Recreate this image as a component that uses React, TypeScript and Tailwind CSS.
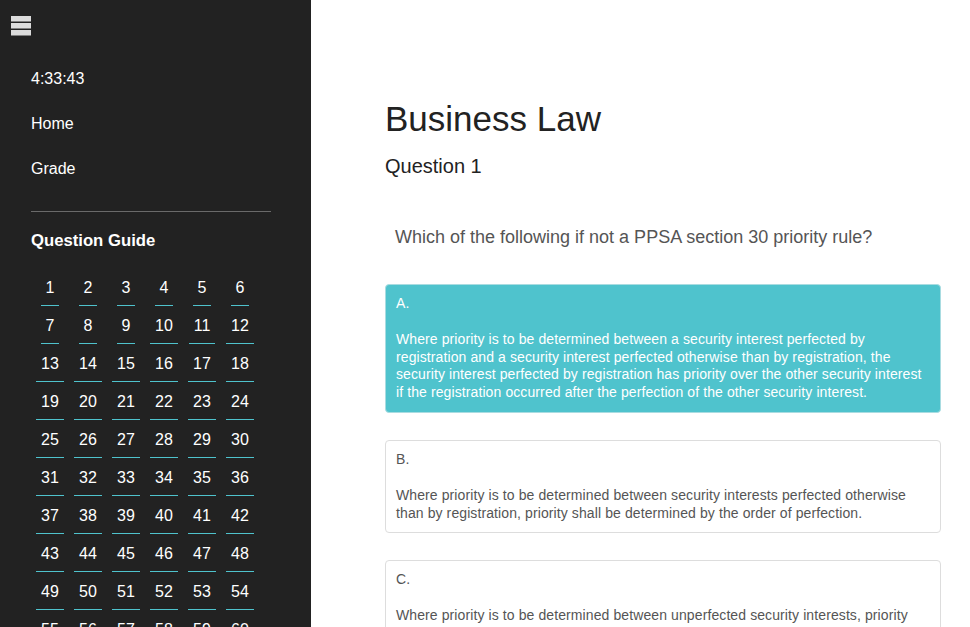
const questionCount = 66;

const options = [
  {
    label: 'A.',
    text: 'Where priority is to be determined between a security interest perfected by registration and a security interest perfected otherwise than by registration, the security interest perfected by registration has priority over the other security interest if the registration occurred after the perfection of the other security interest.',
    active: true,
  },
  {
    label: 'B.',
    text: 'Where priority is to be determined between security interests perfected otherwise than by registration, priority shall be determined by the order of perfection.',
    active: false,
  },
  {
    label: 'C.',
    text: 'Where priority is to be determined between unperfected security interests, priority shall be determined by the order of attachment of the security interests.',
    active: false,
  },
  {
    label: 'D.',
    text: 'Where priority is to be determined between security interests perfected by registration, priority shall be determined by the order of registration.',
    active: false,
  },
];

function MenuIcon() {
  return (
    <svg width="20" height="20" viewBox="0 0 20 20" className="block">
      <rect x="0" y="0" width="20" height="5.5" fill="#dcdcdc" />
      <rect x="0" y="7" width="20" height="5.5" fill="#dcdcdc" />
      <rect x="0" y="14" width="20" height="5.5" fill="#dcdcdc" />
    </svg>
  );
}

function Sidebar() {
  const nums = Array.from({ length: questionCount }, (_, i) => i + 1);
  return (
    <aside className="w-[311px] shrink-0 h-full bg-[#222222] text-white overflow-hidden">
      <div className="pl-[11px] pt-[16px]">
        <MenuIcon />
      </div>

      <div className="px-[31px]">
        <ul className="mt-[33px] flex flex-col gap-[25px] text-[16px] leading-[20px]">
          <li>4:33:43</li>
          <li>Home</li>
          <li>Grade</li>
        </ul>

        <hr className="mt-[32px] w-[240px] border-0 border-t border-[#6a6a6a]" />

        <h3 className="mt-[18px] text-[16.7px] font-bold leading-[22px]">Question Guide</h3>

        <div className="mt-[26px] grid grid-cols-[repeat(6,38px)] gap-y-[10px] text-[16px] leading-[20px]">
          {nums.map((n) => (
            <div key={n} className="flex justify-center">
              <span className="px-[5px] pb-[7px] border-b border-[#4fc3cd]">{n}</span>
            </div>
          ))}
        </div>
      </div>
    </aside>
  );
}

function Option({ label, text, active }: { label: string; text: string; active: boolean }) {
  return (
    <div
      className={`rounded-[4px] border pl-[10px] pr-[15px] pt-[10px] pb-[10px] text-[14px] leading-[17.7px] tracking-[0.1px] ${
        active ? 'bg-[#4fc3cd] border-[#a9dce1] text-white' : 'bg-white border-[#dddddd] text-[#555555]'
      }`}
    >
      <p>{label}</p>
      <p className="mt-[18.3px]">{text}</p>
    </div>
  );
}

export default function App() {
  return (
    <div
      className="flex h-[627px] w-full overflow-hidden bg-white"
      style={{ fontFamily: '"Liberation Sans", Arial, sans-serif' }}
    >
      <Sidebar />

      <main className="flex-1 min-w-0 pl-[74px] pr-[29px] pt-[99px] text-[#222222]">
        <h1 className="text-[35px] leading-[40px]">Business Law</h1>
        <h2 className="mt-[15px] text-[20px] leading-[24px]">Question 1</h2>

        <p className="mt-[48px] pl-[10px] text-[18px] leading-[22px] text-[#555555]">
          Which of the following if not a PPSA section 30 priority rule?
        </p>

        <div className="mt-[36px] flex flex-col gap-[27px]">
          {options.map((o) => (
            <Option key={o.label} {...o} />
          ))}
        </div>
      </main>
    </div>
  );
}
